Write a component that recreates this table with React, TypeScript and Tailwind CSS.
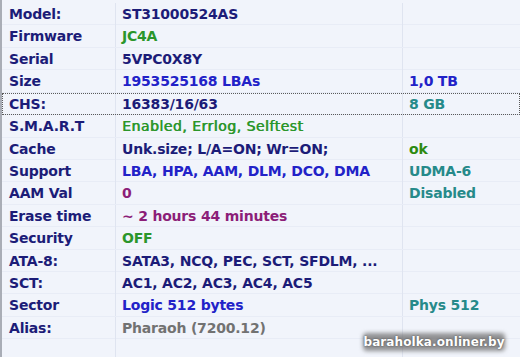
type Cell = { text: string; color: string; light?: boolean }

type Row = {
  label: string
  value: Cell
  extra?: Cell
  focused?: boolean
}

const NAVY = 'text-[#1c1c78]'
const BLUE = 'text-[#2222c8]'
const GREEN = 'text-[#2b962b]'
const TEAL = 'text-[#268a8a]'
const PURPLE = 'text-[#8c1e78]'
const GREY = 'text-[#727272]'

const rows: Row[] = [
  { label: 'Model:', value: { text: 'ST31000524AS', color: NAVY } },
  { label: 'Firmware', value: { text: 'JC4A', color: GREEN } },
  { label: 'Serial', value: { text: '5VPC0X8Y', color: NAVY } },
  {
    label: 'Size',
    value: { text: '1953525168 LBAs', color: BLUE },
    extra: { text: '1,0 TB', color: BLUE },
  },
  {
    label: 'CHS:',
    value: { text: '16383/16/63', color: NAVY },
    extra: { text: '8 GB', color: TEAL },
    focused: true,
  },
  {
    label: 'S.M.A.R.T',
    value: { text: 'Enabled, Errlog, Selftest', color: GREEN, light: true },
  },
  {
    label: 'Cache',
    value: { text: 'Unk.size; L/A=ON; Wr=ON;', color: NAVY },
    extra: { text: 'ok', color: 'text-[#2c8a10]' },
  },
  {
    label: 'Support',
    value: { text: 'LBA, HPA, AAM, DLM, DCO, DMA', color: BLUE },
    extra: { text: 'UDMA-6', color: TEAL },
  },
  {
    label: 'AAM Val',
    value: { text: '0', color: PURPLE },
    extra: { text: 'Disabled', color: TEAL },
  },
  { label: 'Erase time', value: { text: '~ 2 hours 44 minutes', color: PURPLE } },
  { label: 'Security', value: { text: 'OFF', color: GREEN } },
  { label: 'ATA-8:', value: { text: 'SATA3, NCQ, PEC, SCT, SFDLM, ...', color: NAVY } },
  { label: 'SCT:', value: { text: 'AC1, AC2, AC3, AC4, AC5', color: NAVY } },
  {
    label: 'Sector',
    value: { text: 'Logic 512 bytes', color: BLUE },
    extra: { text: 'Phys 512', color: TEAL },
  },
  { label: 'Alias:', value: { text: 'Pharaoh (7200.12)', color: GREY } },
]

function InfoRow({ row }: { row: Row }) {
  return (
    <div
      className={
        'grid h-[22.43px] grid-cols-[114px_287px_1fr] items-center border-b border-[#e8ecf6] ' +
        (row.focused ? 'outline-1 -outline-offset-1 outline-dotted outline-[#5a5a5a]' : '')
      }
    >
      <div className="h-full border-r border-[#dfe4f0] pl-[7px] leading-[22px] text-[#1c1c78]">
        {row.label}
      </div>
      <div
        className={
          'h-full border-r border-[#dfe4f0] pl-[6px] leading-[22px] ' +
          row.value.color +
          (row.value.light ? ' font-normal tracking-[0.5px] [text-shadow:0.6px_0_0_currentColor]' : '')
        }
      >
        {row.value.text}
      </div>
      <div className={'h-full pl-[6px] leading-[22px] ' + (row.extra?.color ?? '')}>
        {row.extra?.text}
      </div>
    </div>
  )
}

export default function App() {
  return (
    <div className="relative h-[357px] w-[520px] overflow-hidden border-l-2 border-[#a9adb6] bg-[#f1f4fb] pt-[3px] font-['DejaVu_Sans',sans-serif] text-[14px] font-bold tracking-[-0.2px]">
      {rows.map((r) => (
        <InfoRow key={r.label} row={r} />
      ))}
      <div className="grid h-full grid-cols-[114px_287px_1fr]">
        <div className="border-r border-[#dfe4f0]" />
        <div className="border-r border-[#dfe4f0]" />
      </div>
      {/* watermark */}
      <div className="absolute right-[15px] bottom-[6px] h-[18px] w-[142px] rounded-[4px] bg-[#6f6f6f]/75 blur-[2px]" />
      <span className="absolute right-[15px] bottom-[7px] w-[142px] text-center text-[12px] leading-[16px] tracking-[0.1px] text-white [text-shadow:0_0_2px_#444]">
        baraholka.onliner.by
      </span>
    </div>
  )
}
